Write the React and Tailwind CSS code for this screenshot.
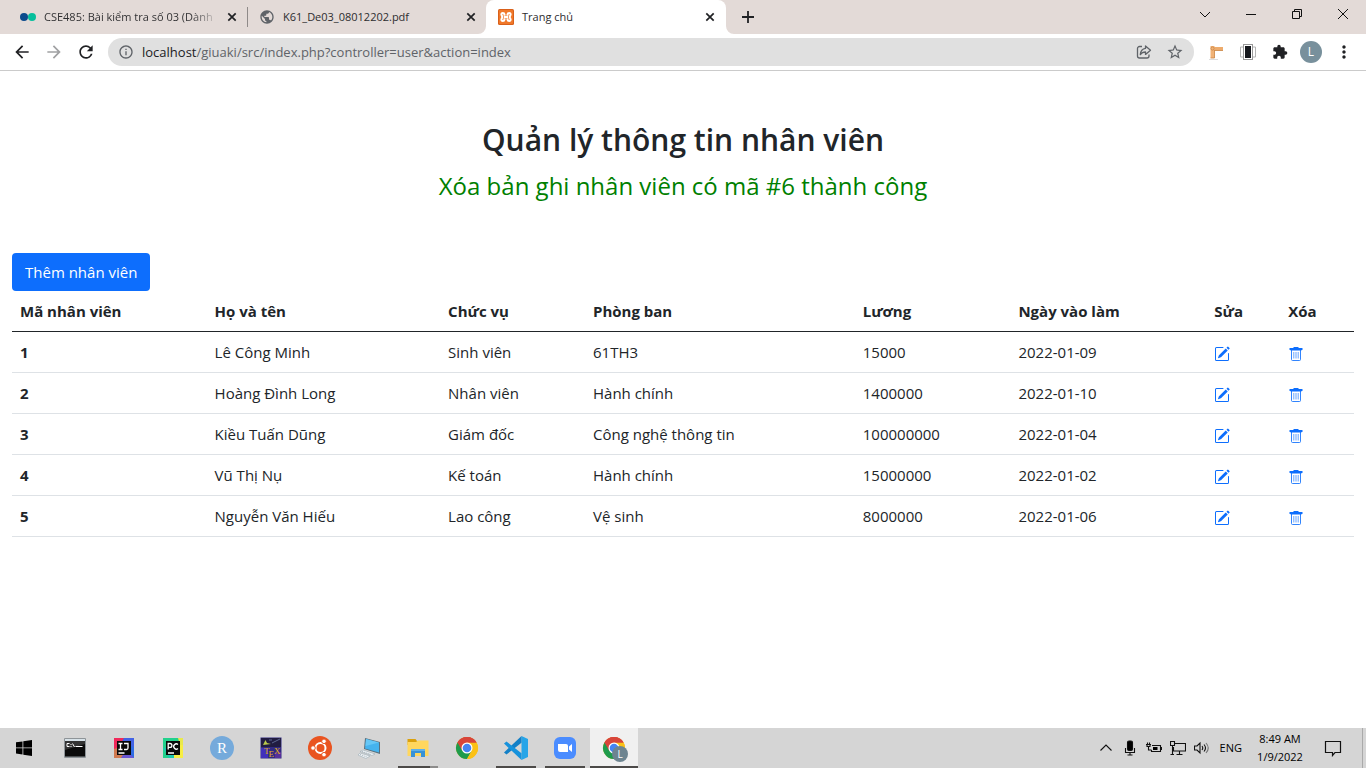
import React from "react";
import {
  MdArrowBack,
  MdArrowForward,
  MdRefresh,
  MdExtension,
  MdMoreVert,
  MdInfoOutline,
  MdStarBorder,
  MdPublic,
} from "react-icons/md";
import { BsPencilSquare } from "react-icons/bs";

const employees = [
  { id: 1, name: "Lê Công Minh", role: "Sinh viên", dept: "61TH3", salary: "15000", date: "2022-01-09" },
  { id: 2, name: "Hoàng Đình Long", role: "Nhân viên", dept: "Hành chính", salary: "1400000", date: "2022-01-10" },
  { id: 3, name: "Kiều Tuấn Dũng", role: "Giám đốc", dept: "Công nghệ thông tin", salary: "100000000", date: "2022-01-04" },
  { id: 4, name: "Vũ Thị Nụ", role: "Kế toán", dept: "Hành chính", salary: "15000000", date: "2022-01-02" },
  { id: 5, name: "Nguyễn Văn Hiếu", role: "Lao công", dept: "Vệ sinh", salary: "8000000", date: "2022-01-06" },
];

const columns = [
  ["Mã nhân viên", "w-[14.5%]"],
  ["Họ và tên", "w-[17.4%]"],
  ["Chức vụ", "w-[10.8%]"],
  ["Phòng ban", "w-[20.1%]"],
  ["Lương", "w-[11.6%]"],
  ["Ngày vào làm", "w-[14.6%]"],
  ["Sửa", "w-[5.5%]"],
  ["Xóa", "w-[5.5%]"],
];

function DotsIcon() {
  return (
    <svg viewBox="0 0 16 16" className="size-4 shrink-0" aria-hidden="true">
      <circle cx="4" cy="8" r="4" fill="#0b4a8c" />
      <circle cx="12" cy="8" r="4" fill="#06bf9c" />
    </svg>
  );
}

function XamppIcon() {
  return (
    <svg viewBox="0 0 16 16" className="size-4 shrink-0" aria-hidden="true">
      <rect width="16" height="16" rx="1.5" fill="#d9601a" />
      <rect x="1" y="1" width="14" height="14" rx="1" fill="#f0782a" />
      <path
        d="M5 3.800L11 3.800M5 12.200L11 12.200"
        stroke="#fff"
        strokeWidth="0"
      />
      <path
        d="M6.500 6.800V5.500Q6.300 4 4.800 4T3.400 5.600L4.400 8 3.400 10.400Q3.300 12 4.800 12T6.500 10.500V9.200M9.500 6.800V5.500Q9.700 4 11.200 4T12.600 5.600L11.600 8 12.600 10.400Q12.700 12 11.200 12T9.500 10.500V9.200M6 8H10"
        fill="none"
        stroke="#fff"
        strokeWidth="2"
        strokeLinejoin="round"
      />
    </svg>
  );
}

function TrashIcon() {
  return (
    <svg viewBox="0 0 16 16" className="size-4" fill="none" stroke="currentColor" aria-hidden="true">
      <path d="M5.500 1.500h5" />
      <path d="M1.500 3h13" strokeWidth="2" />
      <path d="M2.500 4.500h11" strokeOpacity=".5" />
      <path d="M3.500 4v9.500a1 1 0 0 0 1 1h7a1 1 0 0 0 1-1V4" strokeOpacity=".85" />
      <path d="M5.800 6v6.500M8 6v6.500M10.200 6v6.500" strokeWidth=".8" strokeOpacity=".8" />
    </svg>
  );
}

function Tab({ icon, title, active, fade }) {
  return (
    <div
      className={
        active
          ? "relative flex h-[34px] w-60 shrink-0 items-center rounded-t-lg bg-white pr-2 pl-3"
          : "flex h-[34px] items-center pr-[7px]"
      }
    >
      {active && (
        <>
          <svg viewBox="0 0 8 8" className="absolute bottom-0 -left-2 size-2" aria-hidden="true">
            <path d="M8 0v8H0a8 8 0 0 0 8-8z" fill="#fff" />
          </svg>
          <svg viewBox="0 0 8 8" className="absolute -right-2 bottom-0 size-2" aria-hidden="true">
            <path d="M0 0v8h8a8 8 0 0 1-8-8z" fill="#fff" />
          </svg>
        </>
      )}
      {icon}
      <span
        className={
          fade
            ? "ml-2 min-w-0 flex-1 bg-linear-to-r from-[#2d2d2f] from-85% to-[#d0c8c6] bg-clip-text text-[11px] leading-4 whitespace-nowrap text-transparent"
            : "ml-2 min-w-0 flex-1 text-[11px] leading-4 whitespace-nowrap text-[#2d2d2f]"
        }
      >
        {title}
      </span>
      <button type="button" aria-label="Close tab" className="ml-2 flex size-4 items-center justify-center text-[#202124]">
        <svg viewBox="0 0 16 16" className="size-4" aria-hidden="true">
          <path d="M4.300 4.300l7.400 7.400M11.700 4.300l-7.400 7.400" stroke="currentColor" strokeWidth="1.700" />
        </svg>
      </button>
    </div>
  );
}

function WindowButton({ label, children }) {
  return (
    <button type="button" aria-label={label} className="flex h-7 w-[46px] items-center justify-center">
      <svg viewBox="0 0 12 12" className="size-3" fill="none" stroke="#111" strokeWidth="1" aria-hidden="true">
        {children}
      </svg>
    </button>
  );
}

function TabStrip() {
  return (
    <header className="flex h-[34px] bg-[#e3dad7]">
      <div className="flex w-[247px] flex-col justify-center pl-5">
        <Tab icon={<DotsIcon />} title="CSE485: Bài kiểm tra số 03 (Dành" fade />
      </div>
      <div className="my-auto h-5 w-px bg-[#8f8a89]" />
      <div className="flex w-[238px] flex-col justify-center pl-[11px]">
        <Tab icon={<MdPublic className="size-4 shrink-0 text-[#5f6368]" />} title="K61_De03_08012202.pdf" />
      </div>
      <Tab icon={<XamppIcon />} title="Trang chủ" active />
      <button type="button" aria-label="New tab" className="ml-3 flex w-5 items-center justify-center text-[#202124]">
        <svg viewBox="0 0 20 20" className="size-5" aria-hidden="true">
          <path d="M10 4v12M4 10h12" stroke="currentColor" strokeWidth="1.800" />
        </svg>
      </button>
      <div className="ml-auto flex">
        <WindowButton label="Search tabs"><path d="M1 4l5 5 5-5" /></WindowButton>
        <WindowButton label="Minimize"><path d="M1 6.500h10" /></WindowButton>
        <WindowButton label="Restore">
          <path d="M1.500 3.500h7v7h-7zM3.500 3.500v-2h7v7h-2" />
        </WindowButton>
        <WindowButton label="Close"><path d="M1 1l10 10M11 1L1 11" /></WindowButton>
      </div>
    </header>
  );
}

function ShareIcon() {
  return (
    <svg viewBox="0 0 16 16" className="size-4" fill="none" stroke="#5f6368" strokeWidth="1.300" strokeLinejoin="round" aria-hidden="true">
      <path d="M6 2.500H3.500a2 2 0 0 0-2 2v7.500a2 2 0 0 0 2 2H11a2 2 0 0 0 2-2v-1.500" />
      <path d="M9.500 2l5 4.200-5 4.200V8c-2.500 0-4 .8-5.200 2.600C4.600 7.300 6.500 4.800 9.500 4.400z" />
    </svg>
  );
}

function RulerIcon() {
  return (
    <svg viewBox="0 0 16 16" className="size-4" aria-hidden="true">
      <path d="M5 3h10v3.500H5z" fill="#edab6c" />
      <path d="M2.500 2h4v12h-4z" fill="#f0b277" />
      <path d="M6.500 6.500H15M2.500 14h4M6.500 6v8" stroke="#c98442" strokeWidth=".8" fill="none" />
      <circle cx="4.500" cy="4.500" r="1.600" fill="none" stroke="#c98442" strokeWidth=".8" />
      <path d="M1 15.500h9" stroke="#ddd" />
    </svg>
  );
}

function ViewportIcon() {
  return (
    <svg viewBox="0 0 16 16" className="size-4" aria-hidden="true">
      <path d="M3 3H.5v10H3M13 3h2.500v10H13" fill="none" stroke="#b5b5b5" />
      <rect x="3.500" y=".5" width="9" height="15" fill="#fff" stroke="#999" />
      <rect x="5" y="2" width="6" height="12" fill="#15171c" />
    </svg>
  );
}

function Toolbar() {
  return (
    <div className="flex h-[37px] items-center border-b border-[#cbcbcb] bg-white px-3">
      <button type="button" aria-label="Back" className="text-[#202124]"><MdArrowBack className="size-5" /></button>
      <button type="button" aria-label="Forward" className="ml-3 text-[#a0a1a3]"><MdArrowForward className="size-5" /></button>
      <button type="button" aria-label="Reload" className="ml-3 text-[#202124]"><MdRefresh className="size-5" /></button>
      <div className="ml-3 flex h-7 flex-1 items-center rounded-full bg-[#e0e0e0] px-[10px]">
        <MdInfoOutline className="size-4 shrink-0 text-[#5f6368]" />
        <a href="#address" className="ml-2 flex-1 text-[13px] leading-5 text-[#5f6368]">
          <span className="text-[#202124]">localhost</span>/giuaki/src/index.php?controller=user&amp;action=index
        </a>
        <button type="button" aria-label="Share"><ShareIcon /></button>
        <button type="button" aria-label="Bookmark" className="ml-3.5 text-[#5f6368]"><MdStarBorder className="size-[18px]" /></button>
      </div>
      <div className="ml-3.5 flex items-center gap-4">
        <button type="button" aria-label="Ruler"><RulerIcon /></button>
        <button type="button" aria-label="Viewport"><ViewportIcon /></button>
        <button type="button" aria-label="Extensions" className="text-[#202124]"><MdExtension className="size-4" /></button>
      </div>
      <button type="button" aria-label="Profile" className="ml-3 flex size-[22px] items-center justify-center rounded-full bg-[#78909c] text-xs text-white">L</button>
      <button type="button" aria-label="Menu" className="ml-3 text-[#202124]"><MdMoreVert className="size-5" /></button>
    </div>
  );
}

function EmployeePage() {
  return (
    <main className="flex-1 px-3 pt-[50px] text-[15px] text-[#212529]">
      <h2 className="text-center text-[30px] leading-[38px] font-semibold">Quản lý thông tin nhân viên</h2>
      <p className="mt-2 text-center text-2xl leading-[38px] text-[#008000]">Xóa bản ghi nhân viên có mã #6 thành công</p>
      <a href="#add" className="mt-12 inline-block rounded-sm bg-[#0d6efd] px-[13px] py-[7px] leading-6 text-white">
        Thêm nhân viên
      </a>
      <table className="w-full table-fixed text-left leading-6">
        <thead>
          <tr className="border-b border-[#212529]">
            {columns.map(([label, width]) => (
              <th key={label} scope="col" className={`${width} p-2 font-bold`}>{label}</th>
            ))}
          </tr>
        </thead>
        <tbody>
          {employees.map((e) => (
            <tr key={e.id} className="border-b border-[#dee2e6]">
              <th scope="row" className="p-2 font-bold">{e.id}</th>
              <td className="p-2">{e.name}</td>
              <td className="p-2">{e.role}</td>
              <td className="p-2">{e.dept}</td>
              <td className="p-2">{e.salary}</td>
              <td className="p-2">{e.date}</td>
              <td className="p-2">
                <a href="#edit" aria-label="Sửa" className="inline-block align-middle text-[#0d6efd]"><BsPencilSquare className="size-4" /></a>
              </td>
              <td className="p-2">
                <a href="#delete" aria-label="Xóa" className="inline-block align-middle text-[#0d6efd]"><TrashIcon /></a>
              </td>
            </tr>
          ))}
        </tbody>
      </table>
    </main>
  );
}

function ChromeIcon() {
  return (
    <svg viewBox="0 0 24 24" className="size-6" aria-hidden="true">
      <circle cx="12" cy="12" r="11" fill="#fbc116" />
      <path d="M12 12L2.470 6.500A11 11 0 0 0 12 23l4.760-8.250z" fill="#1e9b4c" />
      <path d="M12 12L2.470 6.500a11 11 0 0 1 19.060 0z" fill="#d8453a" />
      <path d="M12 6.500h9.530A11 11 0 0 1 12 23l4.760-8.250z" fill="#fbc116" />
      <path d="M12 12V6.500h9.530A11 11 0 0 0 2.470 6.500l4.770 8.250z" fill="#d8453a" />
      <circle cx="12" cy="12" r="5.500" fill="#fff" />
      <circle cx="12" cy="12" r="4.300" fill="#4584f3" />
    </svg>
  );
}

function WindowsIcon() {
  return (
    <svg viewBox="0 0 16 16" className="size-4" aria-hidden="true">
      <path d="M0 2.300l6.500-.9v6.100H0zM7.300 1.300L16 0v7.500H7.300zM0 8.300h6.500v6.200L0 13.600zM7.300 8.300H16V16l-8.700-1.300z" fill="#000" />
    </svg>
  );
}

function TerminalIcon() {
  return (
    <svg viewBox="0 0 24 24" className="size-6" aria-hidden="true">
      <rect x="1" y="2" width="22" height="20" rx="1" fill="#8e9498" />
      <rect x="2" y="3" width="20" height="2" fill="#d7e2e8" />
      <rect x="2" y="5" width="20" height="15.500" fill="#0a0a0a" />
      <path d="M2 5h20v3L2 14z" fill="#333" />
      <path d="M6.500 7.500H4v3h2.500M8 8v1M8 10v1M9.500 7.500l2 3.500M12.500 10.500h7" stroke="#fff" fill="none" />
    </svg>
  );
}

function IntellijIcon() {
  return (
    <svg viewBox="0 0 24 24" className="size-6" aria-hidden="true">
      <path d="M2 2h20v20H2z" fill="#2f6ce5" />
      <path d="M2 2h10L6 13l-4 2z" fill="#f0285a" />
      <path d="M2 13l8-3 4 12H2z" fill="#d07a50" />
      <path d="M12 2h10v9L12 8z" fill="#4263e5" />
      <path d="M9 22l5-8 8 8z" fill="#6b57d2" />
      <rect x="5" y="5" width="14" height="14" fill="#090909" />
      <path d="M6.500 7.500h4M8.500 7.500v6M6.500 13.500h4M12 7.500h4v4.500q0 1.500-1.500 1.500H12M6.500 17h6" stroke="#fff" strokeWidth="1.300" fill="none" />
    </svg>
  );
}

function PycharmIcon() {
  return (
    <svg viewBox="0 0 24 24" className="size-6" aria-hidden="true">
      <path d="M2 2h20v20H2z" fill="#22d18c" />
      <path d="M17 5l5 4v13H9z" fill="#f7ee43" />
      <path d="M2 12l6 10h5V12z" fill="#1bc8b0" />
      <path d="M17 2h5v7h-3z" fill="#e9e94b" />
      <rect x="5" y="5" width="14" height="14" fill="#090909" />
      <path d="M7.200 13.500V7.500h1.800a1.900 1.900 0 0 1 0 3.800H7.200M17 8.500a2.600 2.600 0 1 0 0 4M7 17h6" stroke="#fff" strokeWidth="1.300" fill="none" />
    </svg>
  );
}

function RIcon() {
  return (
    <svg viewBox="0 0 24 24" className="size-6" aria-hidden="true">
      <circle cx="12" cy="12" r="12" fill="#75aadb" />
      <text x="12" y="17" textAnchor="middle" fontSize="15" fill="#fff" fontFamily="Liberation Serif, serif">R</text>
    </svg>
  );
}

function TexIcon() {
  return (
    <svg viewBox="0 0 24 24" className="size-6" aria-hidden="true">
      <path d="M1.500 1.500h21v21h-21z" fill="#312a83" />
      <path d="M2 2h20v9H2z" fill="#211c42" />
      <path d="M4 9l2.500-5L8 7l4 1-4 .5z" fill="#b9c94a" />
      <path d="M13 7l8-4M10 4h3" stroke="#5b6790" />
      <path d="M2 12h7v10H2z" fill="#4131bb" />
      <path d="M16 16h6v6h-6z" fill="#55309b" />
      <text x="5" y="18" fontSize="9" fill="#e2ad21" fontFamily="Liberation Serif, serif">T</text>
      <text x="9.500" y="21" fontSize="9" fill="#e2ad21" fontFamily="Liberation Serif, serif">E</text>
      <text x="15" y="18" fontSize="9" fill="#e2ad21" fontFamily="Liberation Serif, serif">X</text>
    </svg>
  );
}

function UbuntuIcon() {
  return (
    <svg viewBox="0 0 24 24" className="size-6" aria-hidden="true">
      <circle cx="12" cy="12" r="12" fill="#e95420" />
      <circle cx="12.500" cy="12" r="5" fill="none" stroke="#fff" strokeWidth="2" />
      <g fill="#fff" stroke="#e95420" strokeWidth="1">
        <circle cx="5" cy="12" r="2.300" />
        <circle cx="16" cy="5.300" r="2.300" />
        <circle cx="16" cy="18.700" r="2.300" />
      </g>
    </svg>
  );
}

function LaptopIcon() {
  return (
    <svg viewBox="0 0 24 24" className="size-6" aria-hidden="true">
      <path d="M8 2l15 4v12L7 13z" fill="#58707e" />
      <path d="M9 3l13 3.500v10L8 12.500z" fill="#45b3ee" />
      <path d="M9 3l13 3.500L8.500 10z" fill="#66c7f6" />
      <path d="M6 14l12 4-3 1.500-12-4zM3 17l10 3-4 2.500-8-3.500z" fill="#eef3f6" stroke="#91a2ac" strokeWidth=".5" />
      <path d="M5 15.500l9 3M3 18.500l7 2.500" stroke="#a6b1b9" strokeDasharray="1 1" />
    </svg>
  );
}

function FolderIcon() {
  return (
    <svg viewBox="0 0 24 24" className="size-6" aria-hidden="true">
      <path d="M1.500 3h8l1.500 2H22v4H1.500z" fill="#dba10c" />
      <path d="M1.500 6H10l2-1.500h10.500V20h-21z" fill="#ffd75e" />
      <path d="M5 21v-7.500h14V21h-4v-4H9v4z" fill="#3892d6" />
      <path d="M5 13h14v2H5z" fill="#5eb0ea" />
    </svg>
  );
}

function VscodeIcon() {
  return (
    <svg viewBox="0 0 24 24" className="size-6" aria-hidden="true">
      <path d="M17.500 0L24 3v18l-6.500 3z" fill="#27a5e8" />
      <path d="M17.500 0v6.700L2.500 18.500 0 16.500z" fill="#1380c7" />
      <path d="M17.500 24v-6.700L2.500 5.500 0 7.500z" fill="#1692dc" />
    </svg>
  );
}

function ZoomIcon() {
  return (
    <svg viewBox="0 0 24 24" className="size-6" aria-hidden="true">
      <rect x="1" y="1" width="22" height="22" rx="6" fill="#4a8cff" />
      <path d="M5 8h8a2 2 0 0 1 2 2v6H7a2 2 0 0 1-2-2zM16 10.500L19 8v8l-3-2.500z" fill="#fff" />
    </svg>
  );
}

function ProfileChromeIcon() {
  return (
    <span className="relative block">
      <ChromeIcon />
      <span className="absolute top-2.5 left-2.5 flex size-4 items-center justify-center rounded-full bg-[#6d8490] text-[10px] text-white">L</span>
    </span>
  );
}

const apps = [
  ["Command Prompt", TerminalIcon, "none"],
  ["IntelliJ IDEA", IntellijIcon, "none"],
  ["PyCharm", PycharmIcon, "none"],
  ["RStudio", RIcon, "none"],
  ["TeXworks", TexIcon, "none"],
  ["Ubuntu", UbuntuIcon, "none"],
  ["Remote Desktop", LaptopIcon, "none"],
  ["File Explorer", FolderIcon, "grouped"],
  ["Google Chrome", ChromeIcon, "none"],
  ["Visual Studio Code", VscodeIcon, "open"],
  ["Zoom", ZoomIcon, "open"],
  ["Chrome profile", ProfileChromeIcon, "active"],
];

function TrayIcon({ label, children }) {
  return (
    <button type="button" aria-label={label} className="flex w-6 justify-center">
      <svg viewBox="0 0 16 16" className="size-4" fill="none" stroke="#111" strokeWidth="1.100" aria-hidden="true">
        {children}
      </svg>
    </button>
  );
}

function Taskbar() {
  return (
    <footer className="flex h-10 bg-[#d5d5d5] text-black">
      <button type="button" aria-label="Start" className="flex w-12 items-center justify-center">
        <WindowsIcon />
      </button>
      <nav className="ml-[3px] flex gap-px">
        {apps.map(([label, Icon, state]) => (
          <button
            key={label}
            type="button"
            aria-label={label}
            className={`flex w-12 flex-col items-center ${state === "active" ? "bg-[#f0f0f0]" : ""}`}
          >
            <span className="flex flex-1 items-center pt-0.5"><Icon /></span>
            {state === "active" && <span className="h-0.5 w-12 bg-[#4c4a48]" />}
            {state === "open" && <span className="h-0.5 w-10 bg-[#4c4a48]" />}
            {state === "grouped" && (
              <span className="flex h-0.5 w-10"><span className="w-8 bg-[#4c4a48]" /><span className="w-2 bg-[#8d8c8b]" /></span>
            )}
            {state === "none" && <span className="h-0.5" />}
          </button>
        ))}
      </nav>
      <div className="ml-auto flex items-center text-[11px]">
        <TrayIcon label="Show hidden icons"><path d="M2.500 10.500L8 5l5.500 5.500" /></TrayIcon>
        <TrayIcon label="Microphone">
          <rect x="5.500" y="1" width="5" height="9.500" rx="1.500" fill="#000" />
          <path d="M3.500 8v4.500h9V8M8 12.500V15M5.500 15h5" />
        </TrayIcon>
        <TrayIcon label="Battery">
          <path d="M6 5.500h8.500v6h-9V10M14.500 7.500h1v2h-1M0 4.500h5M1.500 4.500v-2M3.500 4.500v-2M1 4.500v2h3v-2M2.500 6.500v3.500h3" />
          <path d="M7 7h4.500v3H7z" fill="#000" stroke="none" />
        </TrayIcon>
        <TrayIcon label="Network">
          <path d="M5 3.500h10.500v7.500h-12V7M9.500 11v3.500M6.500 14.500h6M.5 1.500h4v4h-4zM2.500 5.500v9M.5 14.500h3.500" />
        </TrayIcon>
        <TrayIcon label="Volume">
          <path d="M.5 6h2.500l3-3v10l-3-3H.500zM8 6q1.500 2 0 4M10 4.500q3 3.500 0 7" />
          <path d="M12 3q4.500 5 0 10" stroke="#777" />
        </TrayIcon>
        <span className="ml-1.5">ENG</span>
        <time className="ml-2.5 flex w-14 flex-col items-center leading-[18px]">
          <span>8:49 AM</span>
          <span>1/9/2022</span>
        </time>
        <button type="button" aria-label="Notifications" className="ml-4">
          <svg viewBox="0 0 18 18" className="size-[18px]" fill="none" stroke="#111" strokeWidth="1.200" aria-hidden="true">
            <path d="M1.500 2.500h15v11H11L8.500 16.500v-3h-7z" />
          </svg>
        </button>
        <div className="ml-5 h-10 w-1 border-l border-[#aaa]" />
      </div>
    </footer>
  );
}

export default function App() {
  return (
    <div className="flex min-h-screen flex-col bg-white font-['Open_Sans','Noto_Sans',sans-serif]">
      <TabStrip />
      <Toolbar />
      <EmployeePage />
      <Taskbar />
    </div>
  );
}
